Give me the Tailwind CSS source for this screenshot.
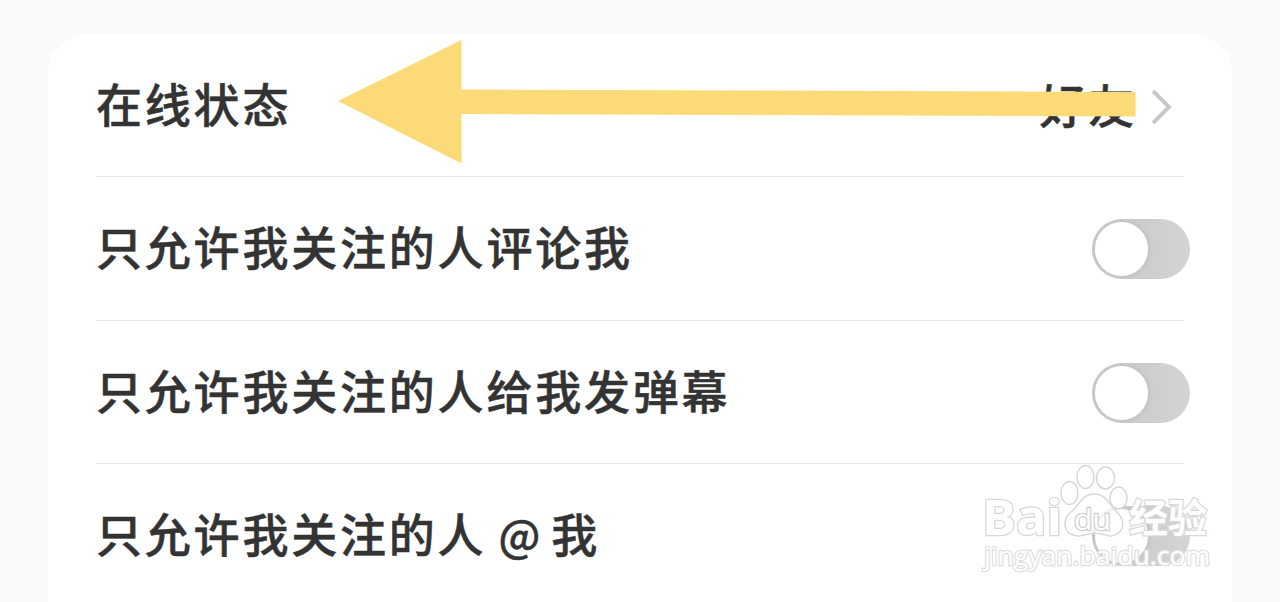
<!DOCTYPE html>
<html lang="zh-CN">
<head>
    <meta charset="UTF-8">
    <meta name="viewport" content="width=device-width, initial-scale=1.0">
    <title>隐私设置</title>
    <script src="https://cdn.jsdelivr.net/npm/@tailwindcss/browser@4"></script>
</head>
<body class="relative h-[602px] overflow-hidden bg-[#fafafa] pt-[34px] pl-12 font-['Noto_Sans_CJK_SC',sans-serif] font-medium text-[#333]">
    <div class="h-[568px] w-[1184px] rounded-t-[40px] bg-white pr-12 pl-12 text-[46px] leading-[60px] tracking-[2.8px] [-webkit-text-stroke:0.5px_#333]">
        <div class="flex h-[143px] items-center justify-between border-b border-[#e6e6e6]">
            <span class="pb-1.5">在线状态</span>
            <div class="flex items-center pr-3">
                <span class="pb-1">好友</span>
                <svg class="mt-1 ml-[15px] h-9 w-5" viewBox="0 0 20 36" fill="none" stroke="#c8c8c8" stroke-width="4">
                    <path d="M1 2L17 18L1 34"/>
                </svg>
            </div>
        </div>

        <div class="flex h-36 items-center justify-between border-b border-[#e6e6e6]">
            <span class="pb-2">只允许我关注的人评论我</span>
            <div class="mt-px -mr-1.5 h-15 w-[98px] rounded-full bg-linear-to-r from-[#c6c6c8] to-[#d4d4d6] p-[3px]">
                <div class="h-[54px] w-[53px] rounded-full bg-white shadow-[2px_0_5px_rgba(0,0,0,0.06)]"></div>
            </div>
        </div>

        <div class="flex h-[143px] items-center justify-between border-b border-[#e6e6e6]">
            <span class="pb-1.5">只允许我关注的人给我发弹幕</span>
            <div class="mt-0.5 -mr-1.5 h-15 w-[98px] rounded-full bg-linear-to-r from-[#c6c6c8] to-[#d4d4d6] p-[3px]">
                <div class="h-[54px] w-[53px] rounded-full bg-white shadow-[2px_0_5px_rgba(0,0,0,0.06)]"></div>
            </div>
        </div>

        <div class="flex h-36 items-center justify-between">
            <span class="pb-2">只允许我关注的人 <span class="-ml-px -mr-[5px] text-[43px]">@</span> 我</span>
            <div class="-mr-1.5 h-15 w-[98px] rounded-full bg-linear-to-r from-[#c6c6c8] to-[#d4d4d6] p-[3px]">
                <div class="h-[54px] w-[53px] rounded-full bg-white shadow-[2px_0_5px_rgba(0,0,0,0.06)]"></div>
            </div>
        </div>
    </div>

    <!-- Seta de destaque -->
    <svg class="absolute top-0 left-0" width="1280" height="180" viewBox="0 0 1280 180">
        <path d="M338 101L461.500 40V89.500L1135.500 92V116.500L461.500 114V163.500Z" fill="#fdda78"/>
    </svg>

    <!-- Marca d'água -->
    <svg class="absolute top-[450px] left-[960px]" width="270" height="152" viewBox="0 0 270 152" fill="#fff" stroke="#d8d8d8" stroke-width="1.500">
        <ellipse cx="109.500" cy="43" rx="8.500" ry="11.500"/>
        <ellipse cx="125.500" cy="27" rx="8.500" ry="11.500"/>
        <ellipse cx="145.500" cy="28" rx="9" ry="11"/>
        <ellipse cx="158.500" cy="48" rx="8.500" ry="11"/>
        <path d="M134 44C122 44 120 55 111 62C103 68 103 80 111 84C119 89 127 83 135 83C143 83 150 89 157 84C165 79 164 69 157 62C149 54 146 44 134 44Z" fill-opacity="0.750"/>
        <g paint-order="stroke" stroke-width="2.500">
            <text x="22" y="85" font-size="49" font-weight="700" textLength="80" lengthAdjust="spacingAndGlyphs" font-family="Open Sans, sans-serif">Bai</text>
            <text x="114" y="80" font-size="29" textLength="37" lengthAdjust="spacingAndGlyphs" font-family="Open Sans, sans-serif" font-weight="400" stroke="#cfcfcf">du</text>
            <text x="169" y="82" font-size="39" font-weight="700" textLength="78" font-family="Noto Sans CJK SC, sans-serif">经验</text>
            <text x="24" y="115" font-size="26" textLength="226" lengthAdjust="spacingAndGlyphs" font-family="Open Sans, sans-serif" font-weight="400" stroke="#e0e0e0">jingyan.baidu.com</text>
        </g>
    </svg>
</body>
</html>
